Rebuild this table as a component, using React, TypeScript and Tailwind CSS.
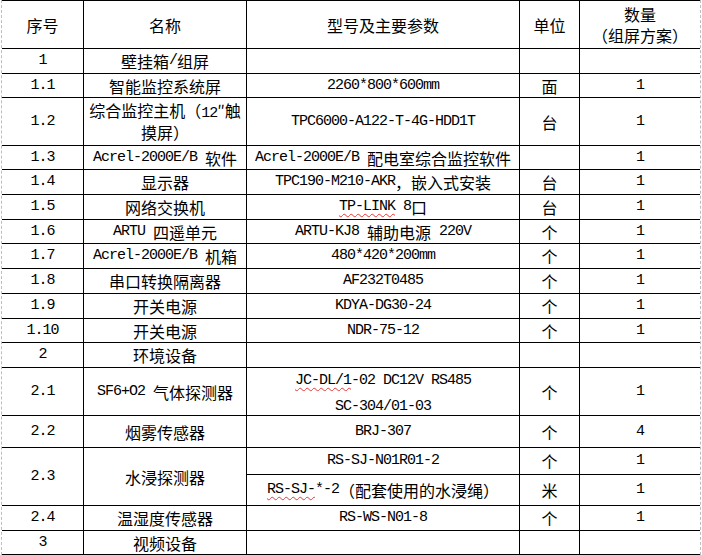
import React from "react";

const latin = "font-['Liberation_Mono',monospace] text-[15px] tracking-[-1px]";

function T({ s, wavy }: { s: string; wavy?: string }) {
  const parts: React.ReactNode[] = [];
  let rest = s;
  let key = 0;
  if (wavy && rest.startsWith(wavy)) {
    parts.push(
      <span
        key={key++}
        className={`${latin} underline decoration-wavy decoration-[#e53935] decoration-1 underline-offset-[3px]`}
      >
        {wavy}
      </span>
    );
    rest = rest.slice(wavy.length);
  }
  const re = /[\x00-\x7F]+|[^\x00-\x7F]+/g;
  const m = rest.match(re) || [];
  for (const p of m) {
    if (/^[\x00-\x7F]/.test(p)) {
      parts.push(
        <span key={key++} className={`${latin} whitespace-pre`}>
          {p}
        </span>
      );
    } else {
      parts.push(<span key={key++}>{p}</span>);
    }
  }
  return <>{parts}</>;
}

function Cell({
  children,
  className = "",
}: {
  children?: React.ReactNode;
  className?: string;
}) {
  return (
    <div
      className={`bg-white flex items-center justify-center text-center overflow-hidden ${className}`}
    >
      {children}
    </div>
  );
}

type Row = [string, string, string, string, string, string?];

const simple: Row[] = [
  ["1", "壁挂箱/组屏", "", "", ""],
  ["1.1", "智能监控系统屏", "2260*800*600mm", "面", "1"],
];

const mid: Row[] = [
  ["1.3", "Acrel-2000E/B 软件", "Acrel-2000E/B 配电室综合监控软件", "", "1"],
  ["1.4", "显示器", "TPC190-M210-AKR，嵌入式安装", "台", "1"],
  ["1.5", "网络交换机", "TP-LINK 8口", "台", "1", "TP-LINK"],
  ["1.6", "ARTU 四遥单元", "ARTU-KJ8 辅助电源 220V", "个", "1"],
  ["1.7", "Acrel-2000E/B 机箱", "480*420*200mm", "个", "1"],
  ["1.8", "串口转换隔离器", "AF232T0485", "个", "1"],
  ["1.9", "开关电源", "KDYA-DG30-24", "个", "1"],
  ["1.10", "开关电源", "NDR-75-12", "个", "1"],
  ["2", "环境设备", "", "", ""],
];

function RowCells({ r }: { r: Row }) {
  return (
    <>
      <Cell>
        <T s={r[0]} />
      </Cell>
      <Cell>
        <T s={r[1]} />
      </Cell>
      <Cell>
        <T s={r[2]} wavy={r[5]} />
      </Cell>
      <Cell>{r[3]}</Cell>
      <Cell>
        <T s={r[4]} />
      </Cell>
    </>
  );
}

export default function App() {
  return (
    <div className="w-[702px] h-[555px] bg-white text-black font-['Noto_Sans_CJK_SC',sans-serif] text-[16px] leading-[18px]">
      <div className="ml-px w-[700px] h-[555px] border-x border-dashed border-[#bdbdbd]">
        <div className="w-[698px] h-[555px] grid grid-cols-[81px_162px_272px_59px_120px] grid-rows-[47px_24px_23px_47px_23px_24px_24px_23px_24px_24px_24px_23px_24px_47px_31px_26px_30px_24px_23px] gap-px bg-black py-px">
          <Cell>序号</Cell>
          <Cell>名称</Cell>
          <Cell>型号及主要参数</Cell>
          <Cell>单位</Cell>
          <Cell className="leading-[21px]">
            <div>
              数量
              <br />
              （组屏方案）
            </div>
          </Cell>

          {simple.map((r) => (
            <RowCells key={r[0]} r={r} />
          ))}

          <Cell>
            <T s="1.2" />
          </Cell>
          <Cell className="leading-[19px]">
            <div>
              综合监控主机（<T s="12" />″触
              <br />
              摸屏）
            </div>
          </Cell>
          <Cell>
            <T s="TPC6000-A122-T-4G-HDD1T" />
          </Cell>
          <Cell>台</Cell>
          <Cell>
            <T s="1" />
          </Cell>

          {mid.map((r) => (
            <RowCells key={r[0]} r={r} />
          ))}

          <Cell>
            <T s="2.1" />
          </Cell>
          <Cell>
            <T s="SF6+O2 气体探测器" />
          </Cell>
          <Cell className="leading-[23px]">
            <div>
              <T s="JC-DL/1-02 DC12V RS485" wavy="JC-DL/1" />
              <br />
              <T s="SC-304/01-03" />
            </div>
          </Cell>
          <Cell>个</Cell>
          <Cell>
            <T s="1" />
          </Cell>

          <RowCells r={["2.2", "烟雾传感器", "BRJ-307", "个", "4"]} />

          <Cell className="row-span-2">
            <T s="2.3" />
          </Cell>
          <Cell className="row-span-2">水浸探测器</Cell>
          <Cell>
            <T s="RS-SJ-N01R01-2" />
          </Cell>
          <Cell>个</Cell>
          <Cell>
            <T s="1" />
          </Cell>
          <Cell>
            <T s="RS-SJ-*-2（配套使用的水浸绳）" wavy="RS-SJ-" />
          </Cell>
          <Cell>米</Cell>
          <Cell>
            <T s="1" />
          </Cell>

          <RowCells r={["2.4", "温湿度传感器", "RS-WS-N01-8", "个", "1"]} />
          <RowCells r={["3", "视频设备", "", "", ""]} />
        </div>
      </div>
    </div>
  );
}
